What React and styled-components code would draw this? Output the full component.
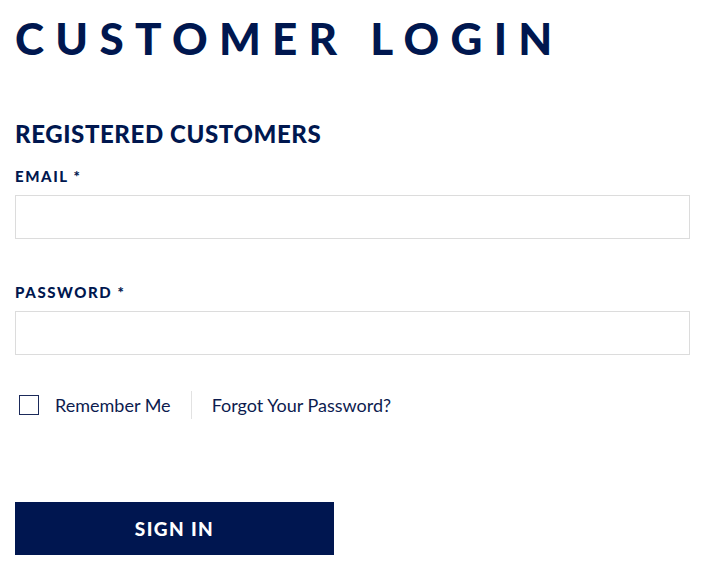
import React from 'react'
import styled, { createGlobalStyle } from 'styled-components'

const GlobalStyle = createGlobalStyle`
    body {
        margin:0;
        background-color:white;
        font-family:Lato, "Liberation Sans", sans-serif;
    }
`

const Container = styled.div`
    padding:18px 17px 16px 15px;
    color:#00174f;
`
const Title = styled.h1`
    margin:0;
    font-size:44px;
    font-weight:900;
    letter-spacing:11.3px;
    line-height:40px;
`
const SubTitle = styled.h2`
    margin:64px 0 0 0;
    font-size:24px;
    font-weight:900;
    letter-spacing:0.6px;
    line-height:24px;
`
const Form = styled.form`
    display:flex;
    flex-direction:column;
`
const Field = styled.div`
    display:flex;
    flex-direction:column;
    margin-top:${props => props.first ? '23px' : '46px'};
`
const Label = styled.label`
    font-size:15px;
    font-weight:900;
    letter-spacing:1.6px;
    line-height:15px;
    margin-bottom:11px;
`
const Input = styled.input`
    height:44px;
    box-sizing:border-box;
    border:1px solid #dcdcdc;
    outline:none;
    padding:0 12px;
    font-size:16px;
`
const Options = styled.div`
    display:flex;
    align-items:center;
    margin-top:35px;
    height:30px;
    font-size:18px;
    font-weight:400;
    color:#0d1c4f;
`
const Check = styled.span`
    width:18px;
    height:18px;
    border:1.5px solid #1b2a5a;
    margin-left:4px;
    margin-right:16px;
`
const Divider = styled.span`
    width:1px;
    height:28px;
    background-color:#e2e2e2;
    margin:0 20px;
`
const Forgot = styled.a`
    cursor:pointer;
`
const Button = styled.button`
    margin-top:82px;
    width:319px;
    height:53px;
    border:none;
    background-color:#001650;
    color:white;
    font-family:Lato, "Liberation Sans", sans-serif;
    font-size:19px;
    font-weight:900;
    letter-spacing:1.4px;
    cursor:pointer;
`

const App = () => {
  return (
    <Container>
        <GlobalStyle/>
        <Title>CUSTOMER LOGIN</Title>
        <SubTitle>REGISTERED CUSTOMERS</SubTitle>
        <Form>
            <Field first>
                <Label>EMAIL *</Label>
                <Input type="email"/>
            </Field>
            <Field>
                <Label>PASSWORD *</Label>
                <Input type="password"/>
            </Field>
            <Options>
                <Check/>
                <span>Remember Me</span>
                <Divider/>
                <Forgot>Forgot Your Password?</Forgot>
            </Options>
            <Button type="button">SIGN IN</Button>
        </Form>
    </Container>
  )
}

export default App
